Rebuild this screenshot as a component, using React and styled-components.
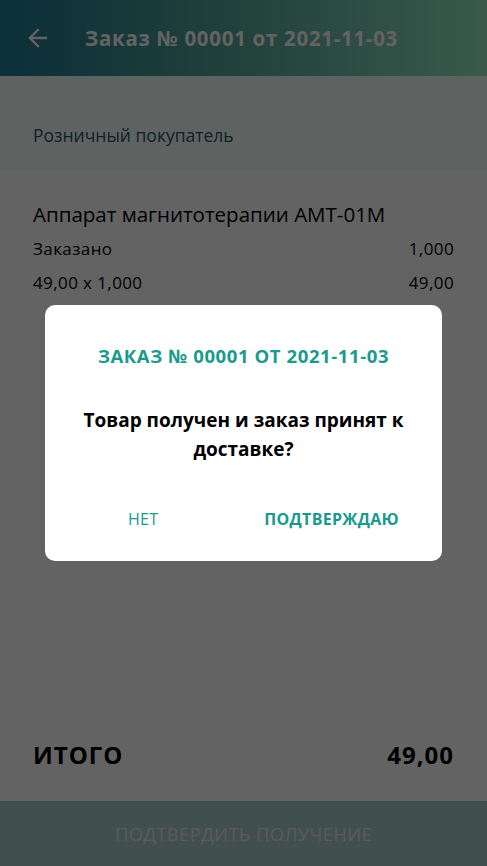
import React from "react";
import styled, { createGlobalStyle } from "styled-components";
import { ArrowLeft } from "lucide-react";

const GlobalStyle = createGlobalStyle`
  html, body {
    margin: 0;
    padding: 0;
    height: 100%;
  }
  body {
    font-family: "Open Sans", "Noto Sans", sans-serif;
    background: #ffffff;
  }
  #root {
    height: 100%;
  }
`;

const Screen = styled.div`
  position: relative;
  height: 866px;
  display: flex;
  flex-direction: column;
  background: #ffffff;
  overflow: hidden;
`;

const Header = styled.header`
  height: 76px;
  display: flex;
  align-items: center;
  gap: 33px;
  padding: 0 24px;
  background: linear-gradient(90deg, #1d7a92 0%, #5aa99a 50%, #96e6c4 100%);
  color: #ffffff;
  box-sizing: border-box;
`;

const Title = styled.h1`
  margin: 0;
  font-size: 20.5px;
  font-weight: 700;
  letter-spacing: 0.7px;
`;

const CustomerBand = styled.div`
  height: 94px;
  display: flex;
  align-items: center;
  padding: 24px 33px 0;
  background: #f2fffd;
  color: #1f5866;
  font-size: 17.5px;
  box-sizing: border-box;
`;

const Content = styled.div`
  flex: 1;
  display: flex;
  flex-direction: column;
  padding: 28px 33px 0;
  color: #000000;
`;

const ProductName = styled.div`
  font-size: 20.5px;
  line-height: 32px;
  margin-bottom: 2px;
`;

const Line = styled.div`
  display: flex;
  justify-content: space-between;
  font-size: 17px;
  letter-spacing: 0.4px;
  line-height: 34px;
`;

const Spacer = styled.div`
  flex: 1;
`;

const Total = styled.div`
  display: flex;
  justify-content: space-between;
  align-items: center;
  font-size: 24px;
  font-weight: 700;
  letter-spacing: 1px;
  height: 40px;
  margin-bottom: 27px;
`;

const ConfirmBar = styled.button`
  height: 65px;
  border: none;
  background: #a8cccc;
  color: #e8e8e8;
  font-family: inherit;
  font-size: 18.5px;
  letter-spacing: 0.3px;
  text-transform: uppercase;
`;

const Overlay = styled.div`
  position: absolute;
  inset: 0;
  background: rgba(0, 0, 0, 0.612);
  display: flex;
  justify-content: center;
  padding-top: 305px;
  box-sizing: border-box;
`;

const Dialog = styled.div`
  width: 397px;
  height: 256px;
  background: #ffffff;
  border-radius: 10px;
  box-sizing: border-box;
  padding: 40px 20px 0;
  display: flex;
  flex-direction: column;
  align-items: center;
  text-align: center;
`;

const DialogTitle = styled.div`
  font-size: 18.5px;
  font-weight: 700;
  line-height: 22px;
  letter-spacing: 0.6px;
  color: #1a9a8c;
  text-transform: uppercase;
  white-space: nowrap;
`;

const Message = styled.div`
  margin-top: 39px;
  font-size: 19px;
  font-weight: 700;
  line-height: 29px;
  color: #000000;
`;

const Actions = styled.div`
  align-self: stretch;
  margin: 37px -20px 0;
  padding: 0 43px 0 83px;
  display: flex;
  justify-content: space-between;
`;

const ActionButton = styled.button`
  height: 36px;
  border: none;
  background: none;
  padding: 0;
  font-family: inherit;
  font-size: 16px;
  letter-spacing: 0.3px;
  font-weight: ${(p) => (p.$strong ? 700 : 500)};
  color: #1a9a8c;
  text-transform: uppercase;
`;

export default function App() {
  return (
    <>
      <GlobalStyle />
      <Screen>
        <Header>
          <ArrowLeft size={28} strokeWidth={2} />
          <Title>Заказ № 00001 от 2021-11-03</Title>
        </Header>
        <CustomerBand>Розничный покупатель</CustomerBand>
        <Content>
          <ProductName>Аппарат магнитотерапии АМТ-01М</ProductName>
          <Line>
            <span>Заказано</span>
            <span>1,000</span>
          </Line>
          <Line>
            <span>49,00 x 1,000</span>
            <span>49,00</span>
          </Line>
          <Spacer />
          <Total>
            <span>ИТОГО</span>
            <span>49,00</span>
          </Total>
        </Content>
        <ConfirmBar>Подтвердить получение</ConfirmBar>
        <Overlay>
          <Dialog>
            <DialogTitle>Заказ № 00001 от 2021-11-03</DialogTitle>
            <Message>Товар получен и заказ принят к доставке?</Message>
            <Actions>
              <ActionButton>Нет</ActionButton>
              <ActionButton $strong>Подтверждаю</ActionButton>
            </Actions>
          </Dialog>
        </Overlay>
      </Screen>
    </>
  );
}
